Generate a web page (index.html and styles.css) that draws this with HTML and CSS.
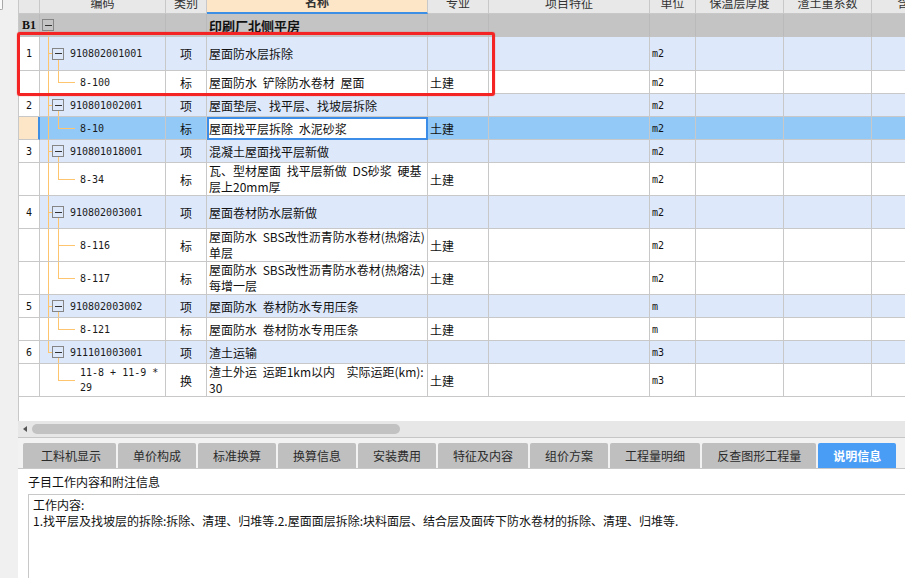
FILE: index.html
```html
<!DOCTYPE html>
<html lang="zh">
<head>
<meta charset="utf-8">
<title>说明信息</title>
<link rel="stylesheet" href="styles.css">
</head>
<body>
<div class="app">
  <div class="strip"><div class="strip-knob"></div></div>
  <div class="main">
    <div class="grid-area">
      <div class="table">
        <div class="row head">
          <div class="c"></div><div class="c">编码</div><div class="c">类别</div><div class="c hl">名称</div><div class="c">专业</div><div class="c">项目特征</div><div class="c">单位</div><div class="c">保温层厚度</div><div class="c">渣土重系数</div><div class="c">含水率</div>
        </div>
        <div class="row grp">
          <div class="c num b1">B1</div><div class="c code t-b1"><span class="box b1box"></span></div><div class="c"></div><div class="c name grpname">印刷厂北侧平房</div><div class="c"></div><div class="c"></div><div class="c"></div><div class="c"></div><div class="c"></div><div class="c"></div>
        </div>
        <div class="row item h34">
          <div class="c num">1</div><div class="c code t-item"><span class="box"></span><span class="ctxt">910802001001</span></div><div class="c kind">项</div><div class="c name">屋面防水层拆除</div><div class="c prof"></div><div class="c"></div><div class="c unit">m2</div><div class="c"></div><div class="c"></div><div class="c"></div>
        </div>
        <div class="row child">
          <div class="c num"></div><div class="c code t-child-last"><span class="ctxt sub">8-100</span></div><div class="c kind">标</div><div class="c name">屋面防水 铲除防水卷材 屋面</div><div class="c prof">土建</div><div class="c"></div><div class="c unit">m2</div><div class="c"></div><div class="c"></div><div class="c"></div>
        </div>
        <div class="row item">
          <div class="c num">2</div><div class="c code t-item"><span class="box"></span><span class="ctxt">910801002001</span></div><div class="c kind">项</div><div class="c name">屋面垫层、找平层、找坡层拆除</div><div class="c prof"></div><div class="c"></div><div class="c unit">m2</div><div class="c"></div><div class="c"></div><div class="c"></div>
        </div>
        <div class="row sel">
          <div class="c num selnum"></div><div class="c code t-child-last"><span class="ctxt sub">8-10</span></div><div class="c kind">标</div><div class="c name edit">屋面找平层拆除 水泥砂浆</div><div class="c prof">土建</div><div class="c"></div><div class="c unit">m2</div><div class="c"></div><div class="c"></div><div class="c"></div>
        </div>
        <div class="row item">
          <div class="c num">3</div><div class="c code t-item"><span class="box"></span><span class="ctxt">910801018001</span></div><div class="c kind">项</div><div class="c name">混凝土屋面找平层新做</div><div class="c prof"></div><div class="c"></div><div class="c unit">m2</div><div class="c"></div><div class="c"></div><div class="c"></div>
        </div>
        <div class="row child h33">
          <div class="c num"></div><div class="c code t-child-last"><span class="ctxt sub">8-34</span></div><div class="c kind">标</div><div class="c name"><span class="ml">瓦、型材屋面 找平层新做 DS砂浆 硬基<br>层上20mm厚</span></div><div class="c prof">土建</div><div class="c"></div><div class="c unit">m2</div><div class="c"></div><div class="c"></div><div class="c"></div>
        </div>
        <div class="row item h33">
          <div class="c num">4</div><div class="c code t-item"><span class="box"></span><span class="ctxt">910802003001</span></div><div class="c kind">项</div><div class="c name">屋面卷材防水层新做</div><div class="c prof"></div><div class="c"></div><div class="c unit">m2</div><div class="c"></div><div class="c"></div><div class="c"></div>
        </div>
        <div class="row child h33">
          <div class="c num"></div><div class="c code t-child"><span class="ctxt sub">8-116</span></div><div class="c kind">标</div><div class="c name"><span class="ml">屋面防水 SBS改性沥青防水卷材(热熔法)<br>单层</span></div><div class="c prof">土建</div><div class="c"></div><div class="c unit">m2</div><div class="c"></div><div class="c"></div><div class="c"></div>
        </div>
        <div class="row child h33">
          <div class="c num"></div><div class="c code t-child-last"><span class="ctxt sub">8-117</span></div><div class="c kind">标</div><div class="c name"><span class="ml">屋面防水 SBS改性沥青防水卷材(热熔法)<br>每增一层</span></div><div class="c prof">土建</div><div class="c"></div><div class="c unit">m2</div><div class="c"></div><div class="c"></div><div class="c"></div>
        </div>
        <div class="row item">
          <div class="c num">5</div><div class="c code t-item"><span class="box"></span><span class="ctxt">910802003002</span></div><div class="c kind">项</div><div class="c name">屋面防水 卷材防水专用压条</div><div class="c prof"></div><div class="c"></div><div class="c unit">m</div><div class="c"></div><div class="c"></div><div class="c"></div>
        </div>
        <div class="row child">
          <div class="c num"></div><div class="c code t-child-last"><span class="ctxt sub">8-121</span></div><div class="c kind">标</div><div class="c name">屋面防水 卷材防水专用压条</div><div class="c prof">土建</div><div class="c"></div><div class="c unit">m</div><div class="c"></div><div class="c"></div><div class="c"></div>
        </div>
        <div class="row item">
          <div class="c num">6</div><div class="c code t-item-last"><span class="box"></span><span class="ctxt">911101003001</span></div><div class="c kind">项</div><div class="c name">渣土运输</div><div class="c prof"></div><div class="c"></div><div class="c unit">m3</div><div class="c"></div><div class="c"></div><div class="c"></div>
        </div>
        <div class="row child h33">
          <div class="c num"></div><div class="c code t-child-end"><span class="ctxt sub">11-8 + 11-9 *<br>29</span></div><div class="c kind">换</div><div class="c name"><span class="ml">渣土外运 运距1km以内  实际运距(km):<br>30</span></div><div class="c prof">土建</div><div class="c"></div><div class="c unit">m3</div><div class="c"></div><div class="c"></div><div class="c"></div>
        </div>
      </div>
    </div>
    <div class="hscroll"><span class="arrow"></span><span class="thumb"></span></div>
    <div class="tabs">
      <div class="tab first">工料机显示</div>
      <div class="tab">单价构成</div>
      <div class="tab">标准换算</div>
      <div class="tab">换算信息</div>
      <div class="tab">安装费用</div>
      <div class="tab">特征及内容</div>
      <div class="tab">组价方案</div>
      <div class="tab">工程量明细</div>
      <div class="tab">反查图形工程量</div>
      <div class="tab active">说明信息</div>
    </div>
    <div class="detail">
      <div class="detail-title">子目工作内容和附注信息</div>
      <div class="detail-box">
        <div>工作内容:</div>
        <div>1.找平层及找坡层的拆除:拆除、清理、归堆等.2.屋面面层拆除:块料面层、结合层及面砖下防水卷材的拆除、清理、归堆等.</div>
      </div>
    </div>
  </div>
  <div class="redmark"></div>
</div>
</body>
</html>
```

FILE: styles.css
```css
* { box-sizing: border-box; }
html, body { margin: 0; padding: 0; }
body {
  width: 905px;
  height: 578px;
  overflow: hidden;
  background: #fff;
  font-family: "Noto Sans CJK SC", "Noto Sans", sans-serif;
  font-size: 12px;
  color: #111;
}
.app {
  position: relative;
  display: flex;
  height: 578px;
}
.strip {
  width: 18px;
  flex: none;
  background: #f0f0f0;
}
.strip-knob {
  width: 3px;
  height: 10px;
  border: 1px solid #a8a8a8;
  border-left: none;
  border-top: none;
  background: #fafafa;
  border-radius: 0 0 2px 0;
}
.main {
  flex: 1;
  min-width: 0;
  display: flex;
  flex-direction: column;
}
.grid-area {
  height: 421px;
  flex: none;
  overflow: hidden;
  border-left: 1px solid #c8c8c8;
}
.table {
  margin-top: -9px;
  width: max-content;
}
.row {
  display: grid;
  grid-template-columns: 21px 126px 41px 221px 61px 161px 46px 88px 88px 88px;
  height: 23px;
}
.row.h33 { height: 33px; }
.row.h34 { height: 34px; }
.c {
  display: flex;
  align-items: center;
  border-right: 1px solid #c8c8c8;
  border-bottom: 1px solid #c8c8c8;
  overflow: hidden;
  white-space: pre;
  line-height: 15px;
}
.head .c {
  background-color: #e8e8e8;
  justify-content: center;
  color: #333;
}
.head .c.hl {
  background-color: #fde6c8;
  border-bottom: 2px solid #3d8fe6;
  font-weight: bold;
}
.grp .c {
  background-color: #c4c4c4;
  border-right-color: #bababa;
  border-bottom-color: #c4c4c4;
}
.item .c { background-color: #dde8fb; }
.child .c { background-color: #fff; }
.sel .c { background-color: #92c9f6; }
.item .c.num, .child .c.num { background-color: #fff; }
.num {
  justify-content: center;
  font-family: "DejaVu Sans Mono", monospace;
  font-size: 10px;
}
.num.b1 {
  font-family: "Liberation Serif", serif;
  font-weight: bold;
  font-size: 12px;
}
.sel .c.selnum {
  background-color: #fde6c8;
  border-right: 2px solid #3d8fe6;
}
.kind { justify-content: center; }
.name { padding-left: 2px; word-spacing: 3px; }
.ml { line-height: 16px; }
.grpname { font-weight: bold; font-size: 13px; }
.prof { padding-left: 2px; }
.unit {
  padding-left: 2px;
  font-family: "DejaVu Sans Mono", monospace;
  font-size: 10px;
}
.sel .c.edit {
  background-color: #fff;
  border: 2px solid #3c8de8;
  padding-left: 0;
}
.ctxt {
  font-family: "DejaVu Sans Mono", monospace;
  font-size: 10px;
  margin-left: 6px;
  color: #1a1a1a;
}
.ctxt.sub { margin-left: 40px; }
.box {
  display: flex;
  align-items: center;
  justify-content: center;
  width: 12px;
  height: 12px;
  flex: none;
  margin-left: 12px;
  border: 1px solid #858585;
  background: #dde8fb;
}
.box::after {
  content: "";
  width: 7px;
  height: 1px;
  background: #333;
}
.box.b1box {
  margin-left: 2px;
  background: #c4c4c4;
}
/* tree connector lines */
.code {
  --t: linear-gradient(#ffc46e, #ffc46e);
  background-repeat: no-repeat;
}
.t-b1 {
  background-image: var(--t);
  background-position: 8px 100%;
  background-size: 1px 40%;
}
.t-item {
  background-image: var(--t), var(--t), var(--t);
  background-position: 8px 0, 8px 50%, 18px 100%;
  background-size: 1px 100%, 4px 1px, 1px 50%;
}
.t-item-last {
  background-image: var(--t), var(--t), var(--t);
  background-position: 8px 0, 8px 50%, 18px 100%;
  background-size: 1px 50%, 4px 1px, 1px 50%;
}
.t-child {
  background-image: var(--t), var(--t), var(--t);
  background-position: 8px 0, 18px 0, 18px 50%;
  background-size: 1px 100%, 1px 100%, 17px 1px;
}
.t-child-last {
  background-image: var(--t), var(--t), var(--t);
  background-position: 8px 0, 18px 0, 18px 50%;
  background-size: 1px 100%, 1px 50%, 17px 1px;
}
.t-child-end {
  background-image: var(--t), var(--t);
  background-position: 18px 0, 18px 50%;
  background-size: 1px 50%, 17px 1px;
}
/* horizontal scrollbar */
.hscroll {
  height: 17px;
  flex: none;
  background: #e7e7e7;
  border-bottom: 1px solid #c6c6c6;
  display: flex;
  align-items: center;
  padding-left: 5px;
  gap: 5px;
}
.arrow {
  width: 0;
  height: 0;
  border-top: 3px solid transparent;
  border-bottom: 3px solid transparent;
  border-right: 4px solid #555;
}
.thumb {
  width: 368px;
  height: 10px;
  border-radius: 5px;
  background: #c2c2c2;
}
/* tabs */
.tabs {
  height: 31px;
  flex: none;
  background: #f2f2f2;
  border-bottom: 1px solid #c8c8c8;
  padding: 5px 0 0 5px;
  display: flex;
  gap: 2px;
}
.tab {
  height: 25px;
  display: flex;
  align-items: center;
  padding: 0 15px;
  background: #bfbfbf;
  border-radius: 2px 2px 0 0;
  color: #2b2b2b;
  font-size: 12px;
  white-space: nowrap;
}
.tab.first { padding-left: 18px; }
.tab.active {
  background: #4a9df5;
  color: #fff;
  font-weight: bold;
}
/* detail */
.detail {
  flex: 1;
  background: #fff;
  padding-left: 10px;
  overflow: hidden;
  display: flex;
  flex-direction: column;
}
.detail-title {
  height: 25px;
  flex: none;
  display: flex;
  align-items: center;
  color: #111;
}
.detail-box {
  flex: 1;
  border: 1px solid #c8c8c8;
  border-right: none;
  border-bottom: none;
  padding: 2px 4px;
  line-height: 16px;
  white-space: nowrap;
}
.redmark {
  position: absolute;
  left: 17px;
  top: 32px;
  width: 478px;
  height: 64px;
  border: 3px solid #f42424;
  border-radius: 3px;
  box-shadow: 0 0 1px #f42424;
  pointer-events: none;
}
```
